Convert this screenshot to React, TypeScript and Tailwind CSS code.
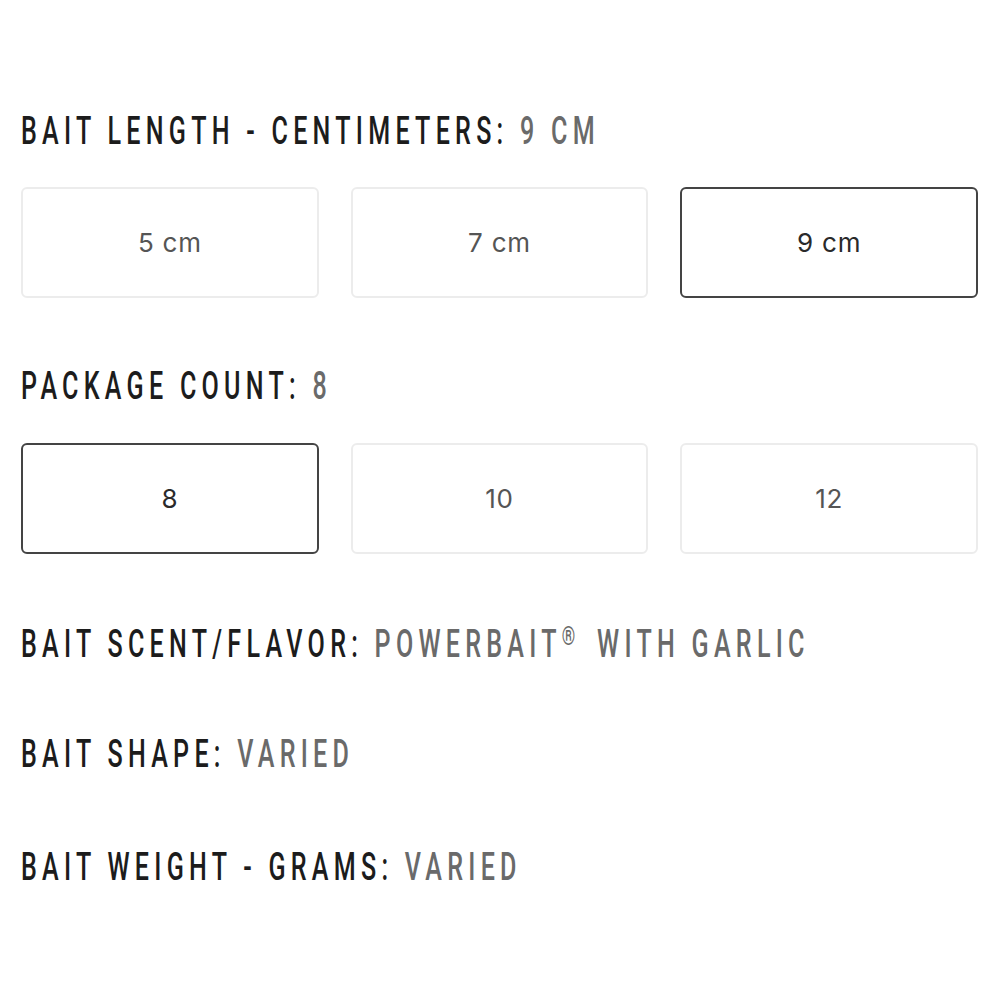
import React from "react";

function Label({ name, value }: { name: string; value: React.ReactNode }) {
  return (
    <div className="h-[40px] flex items-center whitespace-nowrap overflow-visible">
      <div
        className="inline-block origin-left scale-x-[0.66] text-[38px] tracking-[0.21em] leading-none"
        style={{ fontFamily: 'Roboto, "Liberation Sans", sans-serif' }}
      >
        <span className="text-[#1c1c1c] font-medium">{name}: </span>
        <span className="text-[#6a6a6a] font-medium">{value}</span>
      </div>
    </div>
  );
}

function Option({ text, selected }: { text: string; selected?: boolean }) {
  return (
    <div
      className={
        selected
          ? "h-[111px] flex items-center justify-center rounded-[6px] border-2 border-[#444444] bg-white text-[#2a2a2a] text-[26px] tracking-[0.03em]"
          : "h-[111px] flex items-center justify-center rounded-[6px] border-2 border-[#ececec] bg-white text-[#555555] text-[26px] tracking-[0.03em]"
      }
      style={{ fontFamily: 'Inter, "Liberation Sans", sans-serif' }}
    >
      {text}
    </div>
  );
}

export default function App() {
  return (
    <div className="w-[1000px] h-[1000px] bg-white pl-[21px] pr-[22px] pt-[111px]">
      <Label name="BAIT LENGTH - CENTIMETERS" value="9 CM" />
      <div className="grid grid-cols-3 gap-[32px] mt-[36px]">
        <Option text="5 cm" />
        <Option text="7 cm" />
        <Option text="9 cm" selected />
      </div>
      <div className="mt-[68px]">
        <Label name="PACKAGE COUNT" value="8" />
      </div>
      <div className="grid grid-cols-3 gap-[32px] mt-[37px]">
        <Option text="8" selected />
        <Option text="10" />
        <Option text="12" />
      </div>
      <div className="mt-[69px]">
        <Label
          name="BAIT SCENT/FLAVOR"
          value={
            <>
              POWERBAIT<span className="text-[26px] align-[12px] tracking-[0.6em]">®</span> WITH GARLIC
            </>
          }
        />
      </div>
      <div className="mt-[71px]">
        <Label name="BAIT SHAPE" value="VARIED" />
      </div>
      <div className="mt-[73px]">
        <Label name="BAIT WEIGHT - GRAMS" value="VARIED" />
      </div>
    </div>
  );
}
